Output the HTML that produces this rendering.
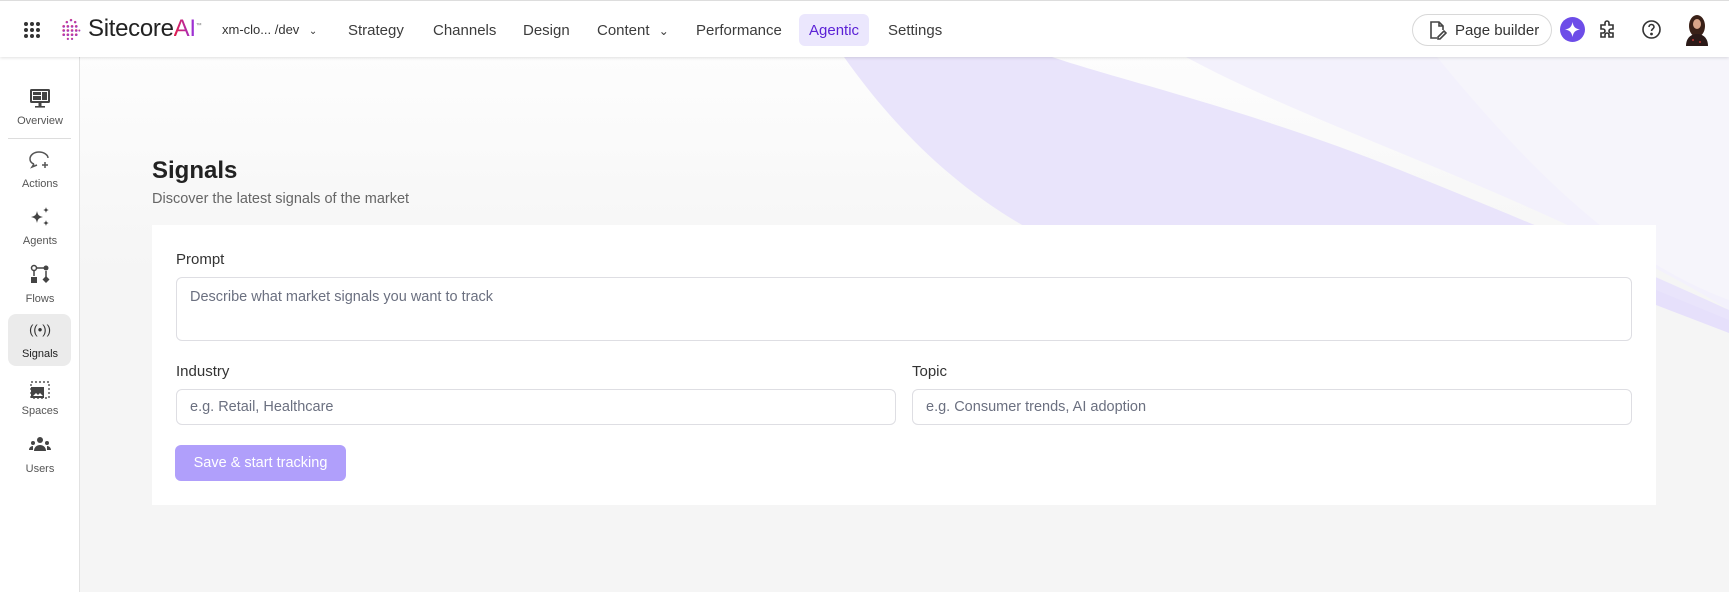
<!DOCTYPE html>
<html><head><meta charset="utf-8"><style>
*{box-sizing:border-box;margin:0;padding:0}
body{width:1729px;height:592px;overflow:hidden;font-family:"Liberation Sans",sans-serif;background:#f5f5f5;position:relative;color:#222}
.hdr{position:absolute;left:0;top:0;width:1729px;height:57px;background:#fff;border-top:1px solid #ddd;box-shadow:0 1px 3px rgba(0,0,0,.12);z-index:5}
.t{position:absolute;white-space:nowrap}
.nav{top:21px;font-size:15px;color:#3c3c3c}
.side{position:absolute;left:0;top:57px;width:80px;height:535px;background:#fff;border-right:1px solid #e2e2e2;z-index:3}
.sl{position:absolute;left:0;width:80px;text-align:center;font-size:11px;color:#555}
.si{position:absolute;left:28px;width:24px;height:24px}
.main{position:absolute;left:80px;top:57px;width:1649px;height:535px;background:linear-gradient(#fdfdfd,#f5f5f5 40%)}
.card{position:absolute;left:152px;top:225px;width:1504px;height:280px;background:#fff;z-index:2}
.lbl{font-size:15px;color:#333}
.inp{position:absolute;border:1px solid #dedee3;border-radius:6px;background:#fff;font-size:14.5px;color:#6b7080;padding-left:13px}
</style></head><body>
<div class="hdr">
 <svg style="position:absolute;left:23px;top:20px" width="18" height="18" viewBox="0 0 18 18" fill="#333"><circle cx="3" cy="3" r="2"/><circle cx="9" cy="3" r="2"/><circle cx="15" cy="3" r="2"/><circle cx="3" cy="9" r="2"/><circle cx="9" cy="9" r="2"/><circle cx="15" cy="9" r="2"/><circle cx="3" cy="15" r="2"/><circle cx="9" cy="15" r="2"/><circle cx="15" cy="15" r="2"/></svg>
 <svg style="position:absolute;left:60px;top:17px" width="22" height="24" viewBox="0 0 20 23"><defs><linearGradient id="lg" x1="0" y1="0" x2="1" y2="1"><stop offset="0" stop-color="#f43f5e"/><stop offset="1" stop-color="#7c3aed"/></linearGradient></defs><g fill="url(#lg)"><circle cx="10" cy="2" r="1.2"/><circle cx="6" cy="4" r="1.2"/><circle cx="14" cy="4" r="1.2"/><circle cx="3" cy="8" r="1.3"/><circle cx="7" cy="8" r="1.3"/><circle cx="11" cy="8" r="1.3"/><circle cx="15" cy="8" r="1.3"/><circle cx="3" cy="12" r="1.3"/><circle cx="7" cy="12" r="1.3"/><circle cx="11" cy="12" r="1.3"/><circle cx="15" cy="12" r="1.3"/><circle cx="18" cy="12" r="1"/><circle cx="3" cy="16" r="1.3"/><circle cx="7" cy="16" r="1.3"/><circle cx="11" cy="16" r="1.3"/><circle cx="15" cy="16" r="1.3"/><circle cx="7" cy="20" r="1.1"/><circle cx="11" cy="20" r="1.1"/></g></svg>
 <div class="t" style="left:88px;top:14px;font-size:24px;color:#222;letter-spacing:-.3px">Sitecore<span style="background:linear-gradient(90deg,#e11d48,#9333ea);-webkit-background-clip:text;color:transparent">AI</span><sup style="font-size:6px;color:#777">™</sup></div>
 <div class="t" style="left:222px;top:21px;font-size:13px;color:#333">xm-clo... /dev <span style="font-size:10px;margin-left:6px">⌄</span></div>
 <div class="t nav" style="left:348px">Strategy</div>
 <div class="t nav" style="left:433px">Channels</div>
 <div class="t nav" style="left:523px">Design</div>
 <div class="t nav" style="left:597px">Content <span style="font-size:12px;margin-left:5px">⌄</span></div>
 <div class="t nav" style="left:696px">Performance</div>
 <div class="t" style="left:799px;top:13px;width:70px;height:32px;background:#ebe7fd;border-radius:6px"></div>
 <div class="t nav" style="left:809px;color:#5b21d6">Agentic</div>
 <div class="t nav" style="left:888px">Settings</div>
 <div class="t" style="left:1412px;top:13px;width:140px;height:32px;border:1px solid #d8d8d8;border-radius:16px"></div>
 <svg style="position:absolute;left:1427px;top:19px" width="20" height="20" viewBox="0 0 20 20" fill="none" stroke="#444" stroke-width="1.6"><path d="M10 18H4V2h8l4 4v4"/><path d="M12 2v4h4"/><path d="M11 17l6-6 2 2-6 6h-2z"/></svg>
 <div class="t" style="left:1455px;top:21px;font-size:15px;color:#333">Page builder</div>
 <div class="t" style="left:1560px;top:16px;width:25px;height:25px;border-radius:50%;background:#6d4de8"></div>
 <svg style="position:absolute;left:1564px;top:20px" width="17" height="17" viewBox="0 0 17 17"><path d="M8.5 1C9.5 6 11 7.5 16 8.5 11 9.5 9.5 11 8.5 16 7.5 11 6 9.5 1 8.5 6 7.5 7.5 6 8.5 1z" fill="#fff"/></svg>
 <svg style="position:absolute;left:1597px;top:17px" width="22" height="22" viewBox="0 0 22 22" fill="none" stroke="#333" stroke-width="1.6"><path d="M4 7h4V5a2 2 0 014 0v2h4v4h-2a2 2 0 000 4h2v4h-4v-2a2 2 0 00-4 0v2H4v-4h2a2 2 0 000-4H4z"/></svg>
 <svg style="position:absolute;left:1641px;top:18px" width="21" height="21" viewBox="0 0 21 21" fill="none" stroke="#333" stroke-width="1.6"><circle cx="10.5" cy="10.5" r="8.5"/><path d="M8 8a2.5 2.5 0 115 0c0 1.8-2.5 2-2.5 4"/><circle cx="10.5" cy="15" r=".6" fill="#333"/></svg>
 <svg style="position:absolute;left:1684px;top:13px" width="26" height="32" viewBox="0 0 26 32"><ellipse cx="13" cy="12" rx="8" ry="11" fill="#3a2118"/><ellipse cx="13" cy="10" rx="4" ry="5" fill="#d9a58a"/><path d="M2 32c0-8 5-12 11-12s11 4 11 12z" fill="#2b1a18"/><circle cx="9" cy="26" r="1" fill="#b33"/><circle cx="16" cy="28" r="1" fill="#b33"/></svg>
</div>
<div class="side">
 <svg class="si" style="top:29px" viewBox="0 0 24 24"><rect x="2" y="3" width="20" height="14" rx="1.5" fill="#444"/><rect x="4" y="5" width="16" height="10" fill="#fff"/><rect x="5" y="6" width="8" height="3" fill="#444"/><rect x="5" y="10" width="8" height="4" fill="#444"/><rect x="14" y="6" width="5" height="8" fill="#444"/><rect x="10.5" y="17" width="3" height="3" fill="#444"/><rect x="7" y="20" width="10" height="1.6" fill="#444"/></svg>
 <div class="sl" style="top:58px">Overview</div>
 <div style="position:absolute;left:8px;top:81px;width:63px;border-top:1px solid #ddd"></div>
 <svg class="si" style="top:91px" viewBox="0 0 24 24" fill="none" stroke="#555" stroke-width="1.5"><path d="M6 16c-3-1-4-3-4-5 0-4 4-7 9-7s9 3 9 6"/><path d="M6 16l-2 3 5-2"/><path d="M17 14v6M14 17h6"/></svg>
 <div class="sl" style="top:121px">Actions</div>
 <svg class="si" style="top:148px" viewBox="0 0 24 24" fill="#444"><path d="M9 6c.8 4 2 5.2 6 6-4 .8-5.2 2-6 6-.8-4-2-5.2-6-6 4-.8 5.2-2 6-6z"/><path d="M18 2c.4 2 1 2.6 3 3-2 .4-2.6 1-3 3-.4-2-1-2.6-3-3 2-.4 2.6-1 3-3z"/><path d="M18 15c.4 2 1 2.6 3 3-2 .4-2.6 1-3 3-.4-2-1-2.6-3-3 2-.4 2.6-1 3-3z"/></svg>
 <div class="sl" style="top:178px">Agents</div>
 <svg class="si" style="top:206px" viewBox="0 0 24 24" fill="#444"><circle cx="6" cy="5" r="2.5" fill="none" stroke="#444" stroke-width="1.5"/><path d="M6 8v5" stroke="#444" stroke-width="1.5"/><rect x="3" y="14" width="6" height="6"/><path d="M9 5h7" stroke="#444" stroke-width="1.5"/><circle cx="18" cy="5" r="2.5"/><path d="M18 8v6" stroke="#444" stroke-width="1.5"/><path d="M18 13l3.5 3.5-3.5 3.5-3.5-3.5z"/></svg>
 <div class="sl" style="top:236px">Flows</div>
 <div style="position:absolute;left:8px;top:257px;width:63px;height:52px;background:#ebebeb;border-radius:8px"></div>
 <div class="sl" style="top:265px;font-size:13px;color:#333">((•))</div>
 <div class="sl" style="top:291px;color:#222">Signals</div>
 <svg class="si" style="top:321px" viewBox="0 0 24 24"><rect x="3" y="4" width="18" height="16" fill="none" stroke="#555" stroke-width="1.4" stroke-dasharray="2 2"/><rect x="3" y="9" width="13" height="11" fill="#444"/><path d="M5 18l3-3 2 2 2-2 3 3z" fill="#fff"/></svg>
 <div class="sl" style="top:348px">Spaces</div>
 <svg class="si" style="top:377px" viewBox="0 0 24 24" fill="#444"><circle cx="12" cy="6" r="3"/><circle cx="5" cy="9" r="2"/><circle cx="19" cy="9" r="2"/><path d="M6 17c0-4 3-6 6-6s6 2 6 6z"/><path d="M1 16c0-2 1.5-4 4-4v4zM23 16c0-2-1.5-4-4-4v4z"/></svg>
 <div class="sl" style="top:406px">Users</div>
</div>
<div class="main">
 <svg style="position:absolute;left:0;top:0" width="1649" height="535" viewBox="80 57 1649 535">
  <path d="M1186 57 C1320 130 1550 200 1729 310 L1729 57Z" fill="#f3f1fc"/>
  <path d="M1437 57 C1530 170 1620 260 1729 300 L1729 57Z" fill="#f6f5fb"/>
  <path d="M844 57 C910 150 980 205 1050 240 L1550 240 C1610 270 1680 300 1729 333 L1729 310 C1620 260 1500 210 1400 170 C1250 110 1120 80 1052 57Z" fill="#e9e4fb"/>
  <path d="M1656 305 L1729 333 L1729 320 L1656 290Z" fill="#e6e0fb"/>
 </svg>
 <div class="t" style="left:72px;top:100px;font-size:24px;color:#222;font-weight:bold">Signals</div>
 <div class="t" style="left:72px;top:134px;font-size:14.5px;color:#666">Discover the latest signals of the market</div>
</div>
<div class="card">
 <div class="t lbl" style="left:24px;top:26px">Prompt</div>
 <div class="inp" style="left:24px;top:52px;width:1456px;height:64px;padding-top:11px">Describe what market signals you want to track</div>
 <div class="t lbl" style="left:24px;top:138px">Industry</div>
 <div class="inp" style="left:24px;top:164px;width:720px;height:36px;line-height:34px">e.g. Retail, Healthcare</div>
 <div class="t lbl" style="left:760px;top:138px">Topic</div>
 <div class="inp" style="left:760px;top:164px;width:720px;height:36px;line-height:34px">e.g. Consumer trends, AI adoption</div>
 <div class="t" style="left:23px;top:220px;width:171px;height:36px;background:#b09ffb;border-radius:6px;color:#fff;font-size:14.5px;line-height:36px;text-align:center">Save &amp; start tracking</div>
</div>
</body></html>
